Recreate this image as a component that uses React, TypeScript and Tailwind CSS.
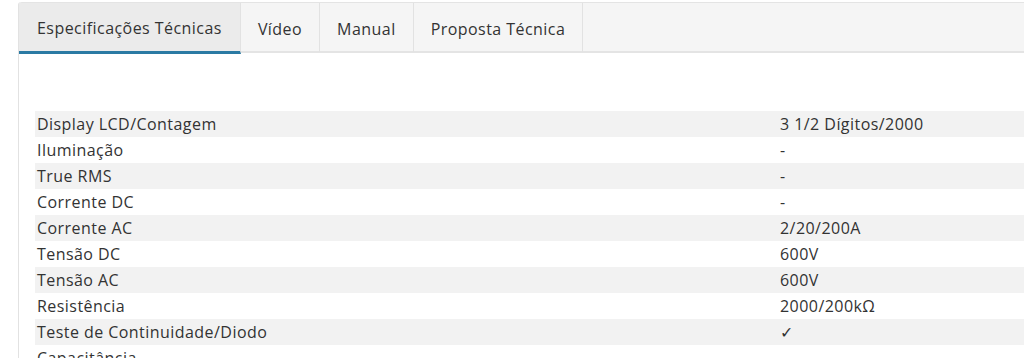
import React, { useState } from 'react';

const tabs = ['Especificações Técnicas', 'Vídeo', 'Manual', 'Proposta Técnica'];

const specs: [string, string][] = [
  ['Display LCD/Contagem', '3 1/2 Dígitos/2000'],
  ['Iluminação', '-'],
  ['True RMS', '-'],
  ['Corrente DC', '-'],
  ['Corrente AC', '2/20/200A'],
  ['Tensão DC', '600V'],
  ['Tensão AC', '600V'],
  ['Resistência', '2000/200kΩ'],
  ['Teste de Continuidade/Diodo', '✓'],
  ['Capacitância', '-'],
];

export default function App() {
  const [active, setActive] = useState(0);

  return (
    <div className="h-[358px] overflow-hidden bg-white pt-[2px] pl-[18px] font-['Open_Sans',sans-serif] text-[16px] tracking-[0.45px] text-[#333]">
      <div className="border-l border-[#e2e2e2] rounded-tl-[3px]">
        {/* tab bar */}
        <div className="flex h-[51px] border-t border-b-2 border-[#e4e4e4] bg-[#f5f5f5] rounded-tl-[3px]">
          {tabs.map((t, i) => (
            <button
              key={t}
              onClick={() => setActive(i)}
              className={
                i === active
                  ? 'h-[51px] -mb-[2px] px-[18px] pt-[2px] border-r border-[#e2e2e2] border-b-[3px] border-b-[#2a7aa3] bg-[#ebebeb] leading-[46px] tracking-[0.45px]'
                  : 'h-[49px] px-[17px] pt-[2px] border-r border-[#e2e2e2] leading-[46px] tracking-[0.45px]'
              }
            >
              {t}
            </button>
          ))}
        </div>

        {/* spec table */}
        <div className="pt-[58px] pl-[16px]">
          <table className="w-full border-collapse">
            <tbody>
              {specs.map(([k, v], i) => (
                <tr key={k} className={i % 2 === 0 ? 'bg-[#f2f2f2]' : 'bg-white'}>
                  <td className="h-[26px] w-[744px] pl-[2px] pt-[1px] leading-[25px]">{k}</td>
                  <td className="h-[26px] pl-[1px] pt-[1px] leading-[25px]">{v}</td>
                </tr>
              ))}
            </tbody>
          </table>
        </div>
      </div>
    </div>
  );
}
